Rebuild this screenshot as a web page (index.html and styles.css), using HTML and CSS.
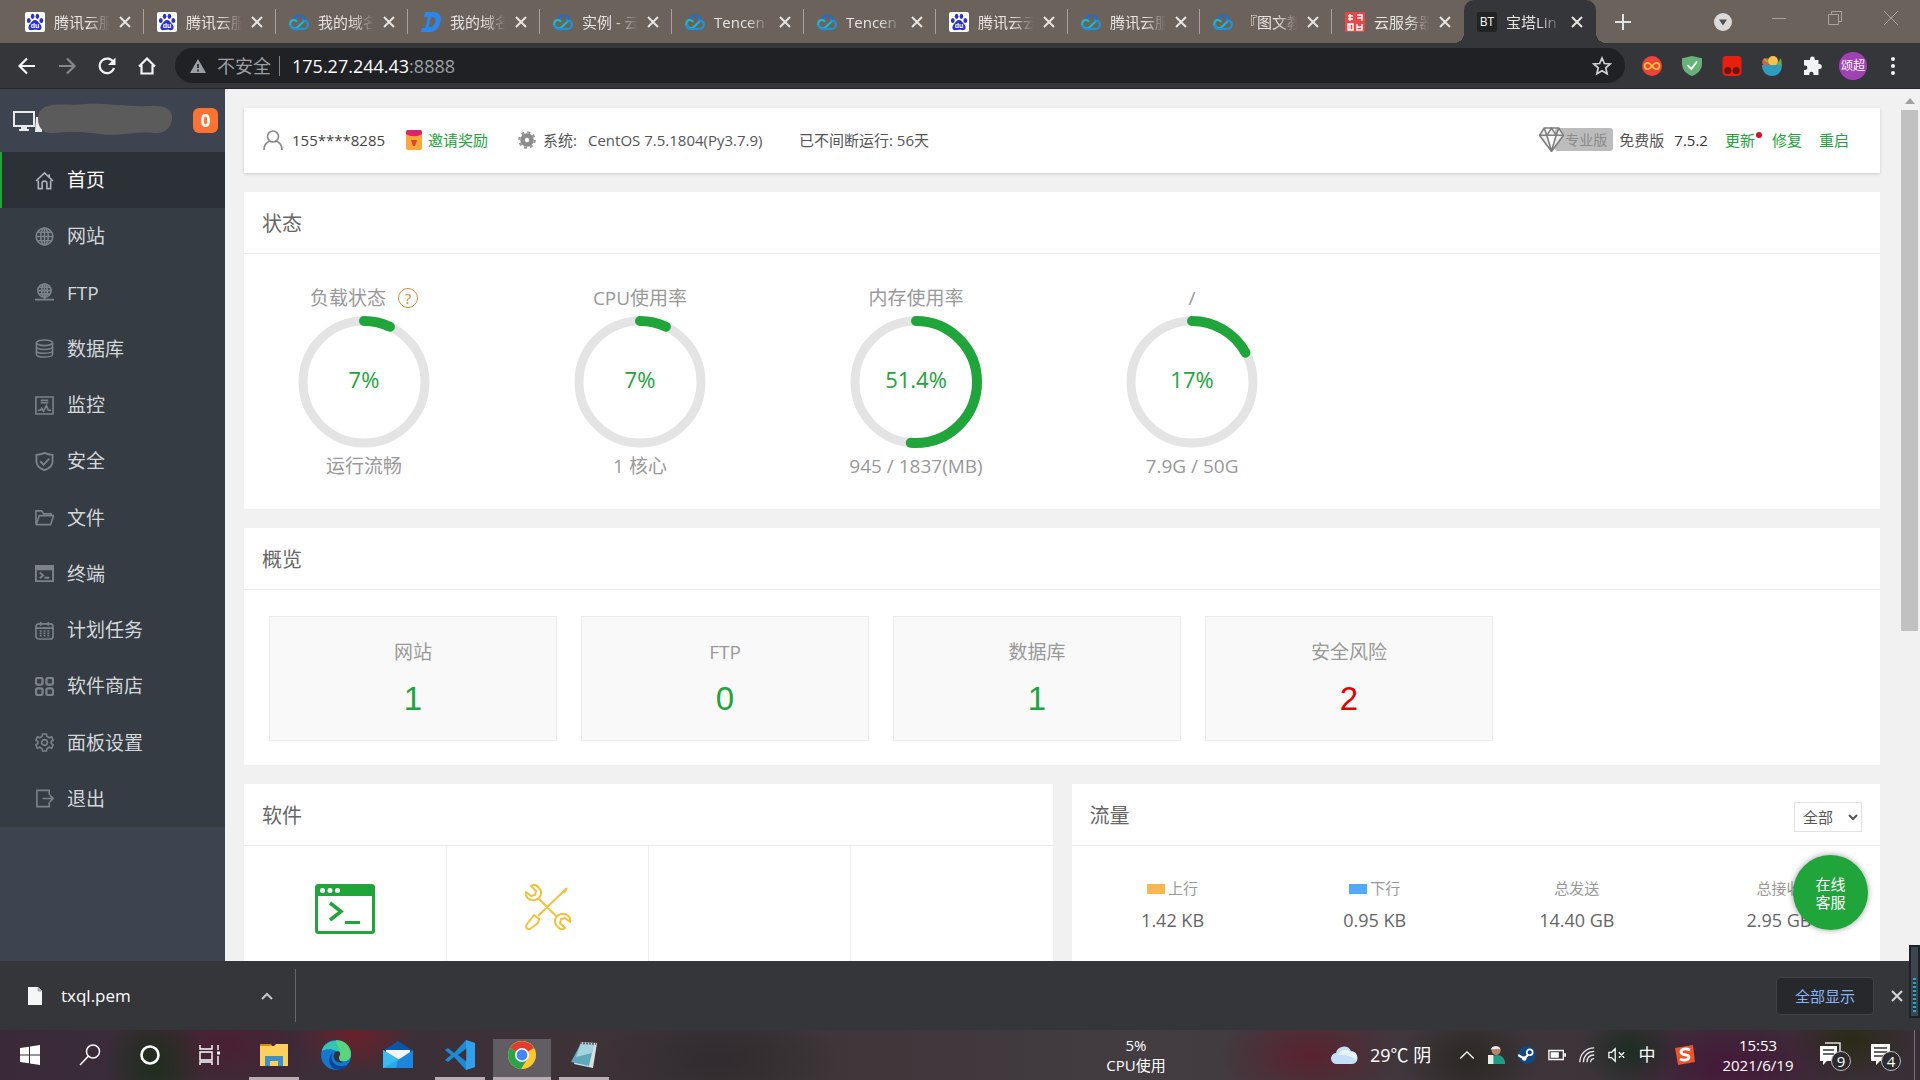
FILE: index.html
```html
<!DOCTYPE html>
<html lang="zh-CN">
<head>
<meta charset="utf-8">
<meta name="viewport" content="width=device-width, initial-scale=1">
<title>宝塔Linux面板</title>
<link rel="stylesheet" href="styles.css">
</head>
<body>
<svg class="sprite" aria-hidden="true">
  <symbol id="baidu" viewBox="0 0 20 20"><rect width="20" height="20" rx="2" fill="#fff"/><g fill="#2a2fd0"><ellipse cx="3.8" cy="8.6" rx="1.9" ry="2.5"/><ellipse cx="7.6" cy="4.3" rx="1.8" ry="2.6"/><ellipse cx="12.4" cy="4.3" rx="1.8" ry="2.6"/><ellipse cx="16.3" cy="8.6" rx="1.9" ry="2.5"/><path d="M10 8c2.300 0 3 2.200 5 4 2 1.700 2.500 6.200-1.200 6.200-1.500 0-2.400-.4-3.800-.4s-2.300.4-3.800.4C2.500 18.200 3 13.700 5 12c2-1.800 2.700-4 5-4z"/></g><text x="10" y="16" font-family="Liberation Sans" font-size="7" font-weight="bold" fill="#fff" text-anchor="middle">du</text></symbol>
  <symbol id="tcloud" viewBox="0 0 20 20"><g fill="none" stroke-width="2.200" stroke-linecap="round"><path d="M5 7.500C6 2.500 14 2 15.500 7.800" stroke="#1f6fd0"/><path d="M7.500 9.200C3.500 6 .8 10 1.300 12.500c.8 4 5.500 4.600 8 2l5-4.800" stroke="#22b8c8"/><path d="M14 8.300c6.500.2 6.200 8.500.3 8.500H5.500c-2.500 0-3.500-1.300-3.900-3" stroke="#2092d8"/></g></symbol>
  <symbol id="dns" viewBox="0 0 20 20"><path fill-rule="evenodd" d="M4 0h9c5 0 8 4 6.500 10C18 16.500 14 20 9 20H0l1-4h3L7 5H3zM10 5L7.500 15H9c3 0 4.500-2.500 5.200-5 .8-3-.2-5-2.700-5z" fill="#2b86ee"/></symbol>
  <symbol id="seal" viewBox="0 0 20 20"><rect width="20" height="20" rx="1" fill="#e8474a"/><path d="M3 4h5M5 2v7M3 7h5M12 3h5v6M12 6h5M3 12h5v6H3zM5 12v6M12 12v6h5v-6M12 15h5" stroke="#fff" stroke-width="1.400" fill="none"/></symbol>
  <symbol id="x" viewBox="0 0 12 12"><path d="M1 1l10 10M11 1L1 11" stroke="currentColor" stroke-width="2"/></symbol>
</svg>

<header class="tabs">
  <div class="tab"><svg class="fav"><use href="#baidu"/></svg><span class="tab-title">腾讯云服</span><button class="tab-x" aria-label="关闭"><svg><use href="#x"/></svg></button></div>
  <div class="tab"><svg class="fav"><use href="#baidu"/></svg><span class="tab-title">腾讯云服</span><button class="tab-x" aria-label="关闭"><svg><use href="#x"/></svg></button></div>
  <div class="tab"><svg class="fav"><use href="#tcloud"/></svg><span class="tab-title">我的域名</span><button class="tab-x" aria-label="关闭"><svg><use href="#x"/></svg></button></div>
  <div class="tab"><svg class="fav"><use href="#dns"/></svg><span class="tab-title">我的域名</span><button class="tab-x" aria-label="关闭"><svg><use href="#x"/></svg></button></div>
  <div class="tab"><svg class="fav"><use href="#tcloud"/></svg><span class="tab-title">实例 - 云</span><button class="tab-x" aria-label="关闭"><svg><use href="#x"/></svg></button></div>
  <div class="tab"><svg class="fav"><use href="#tcloud"/></svg><span class="tab-title">Tencen</span><button class="tab-x" aria-label="关闭"><svg><use href="#x"/></svg></button></div>
  <div class="tab"><svg class="fav"><use href="#tcloud"/></svg><span class="tab-title">Tencen</span><button class="tab-x" aria-label="关闭"><svg><use href="#x"/></svg></button></div>
  <div class="tab"><svg class="fav"><use href="#baidu"/></svg><span class="tab-title">腾讯云云</span><button class="tab-x" aria-label="关闭"><svg><use href="#x"/></svg></button></div>
  <div class="tab"><svg class="fav"><use href="#tcloud"/></svg><span class="tab-title">腾讯云服</span><button class="tab-x" aria-label="关闭"><svg><use href="#x"/></svg></button></div>
  <div class="tab"><svg class="fav"><use href="#tcloud"/></svg><span class="tab-title">『图文教</span><button class="tab-x" aria-label="关闭"><svg><use href="#x"/></svg></button></div>
  <div class="tab no-line"><svg class="fav"><use href="#seal"/></svg><span class="tab-title">云服务器</span><button class="tab-x" aria-label="关闭"><svg><use href="#x"/></svg></button></div>
  <div class="tab active"><span class="fav bt">BT</span><span class="tab-title">宝塔Lin</span><button class="tab-x" aria-label="关闭"><svg><use href="#x"/></svg></button></div>
  <button class="new-tab" aria-label="新标签页"><svg width="16" height="16" viewBox="0 0 16 16"><path d="M8 0v16M0 8h16" stroke="#e4e2e0" stroke-width="2"/></svg></button>
  <div class="win-btns">
    <button aria-label="标签搜索"><svg width="18" height="18" viewBox="0 0 18 18"><circle cx="9" cy="9" r="9" fill="#dddbda"/><path d="M5 6.500h8l-4 6z" fill="#55504c"/></svg></button>
    <button aria-label="最小化"><svg width="14" height="14" viewBox="0 0 14 14"><path d="M0 7.500h14" stroke="#a8a39e"/></svg></button>
    <button aria-label="还原"><svg width="14" height="14" viewBox="0 0 14 14"><path d="M.5 3.500h10v10H.5zM3.500 3.500v-3h10v10h-3" fill="none" stroke="#a8a39e"/></svg></button>
    <button aria-label="关闭窗口"><svg width="14" height="14" viewBox="0 0 14 14"><path d="M0 0l14 14M14 0L0 14" stroke="#a8a39e"/></svg></button>
  </div>
</header>

<nav class="toolbar">
  <button aria-label="后退"><svg viewBox="0 0 20 20"><path d="M18 10H3M10 2.500L2.500 10l7.500 7.500" fill="none" stroke="#f1f3f4" stroke-width="2.200"/></svg></button>
  <button aria-label="前进"><svg viewBox="0 0 20 20"><path d="M2 10h15M10 2.500l7.500 7.500-7.500 7.500" fill="none" stroke="#84878b" stroke-width="2.200"/></svg></button>
  <button aria-label="刷新"><svg viewBox="0 0 20 20"><path d="M16.500 6.500A7.300 7.300 0 1 0 17 12" fill="none" stroke="#f1f3f4" stroke-width="2.200"/><path d="M18.500 1.500v7.500H11z" fill="#f1f3f4"/></svg></button>
  <button aria-label="主页"><svg viewBox="0 0 20 20"><path d="M2 10.500L10 2.500l8 8M4.500 9v8.500h11V9" fill="none" stroke="#f1f3f4" stroke-width="2.200"/></svg></button>
  <div class="omni">
    <svg class="warn" viewBox="0 0 16 14"><path d="M8 0l8 14H0z" fill="#9aa0a6"/><path d="M8 5v4M8 10.500v2" stroke="#202124" stroke-width="1.600"/></svg>
    <span class="unsafe">不安全</span><span class="omni-sep"></span>
    <span class="url">175.27.244.43<span>:8888</span></span>
    <svg class="star" viewBox="0 0 20 20"><path d="M10 2l2.400 5.500 5.800.5-4.400 3.900 1.300 5.800-5.100-3-5.100 3 1.300-5.800L1.800 8l5.800-.5z" fill="none" stroke="#d0d2d5" stroke-width="1.700"/></svg>
  </div>
  <div class="exts">
    <button aria-label="扩展 1"><svg viewBox="0 0 20 20"><circle cx="10" cy="10" r="10" fill="#ef4238"/><path d="M10 10C8 7 7 6.800 5.800 6.800a3.200 3.200 0 0 0 0 6.400C7 13.200 8 13 10 10s3-3.200 4.200-3.200a3.200 3.200 0 0 1 0 6.400C13 13.200 12 13 10 10z" fill="none" stroke="#ffc43a" stroke-width="1.800"/></svg></button>
    <button aria-label="扩展 2"><svg viewBox="0 0 20 20"><path d="M10 0l10 2.200v5.300C20 14 15 18.500 10 20 5 18.500 0 14 0 7.500V2.200z" fill="#67b279"/><path d="M5.500 9l3.800 4L15 5.500" fill="none" stroke="#fff" stroke-width="1.800"/></svg></button>
    <button aria-label="扩展 3"><svg viewBox="0 0 20 20"><rect y="0" x=".5" width="19" height="20" rx="4" fill="#e81f0c"/><circle cx="5.800" cy="14.500" r="3.500" fill="#6b1510"/><circle cx="14.200" cy="14.500" r="3.500" fill="#6b1510"/></svg></button>
    <button aria-label="扩展 4"><svg viewBox="0 0 20 20"><circle cx="4" cy="6" r="3.800" fill="#e45b3c"/><path d="M14 9l5-7 1 8z" fill="#6fae3d"/><circle cx="11" cy="5" r="5" fill="#f7c24a"/><path d="M2 3l4 3" stroke="#7cbf3a" stroke-width="2"/><path d="M0 9h20c0 7-4.500 11-10 11S0 16 0 9z" fill="#2f9cc0"/></svg></button>
    <button aria-label="扩展程序"><svg viewBox="0 0 20 20"><path d="M8 4V3a2.400 2.400 0 0 1 4.800 0v1H16.500v4h.8a2.400 2.400 0 0 1 0 5h-.8v6h-5v-1.200a2.100 2.100 0 0 0-4.200 0V19H2v-5h1.200a2.200 2.200 0 0 0 0-4.400H2V4z" fill="#f1f3f4"/></svg></button>
    <button class="avatar" aria-label="用户">颂超</button>
    <button aria-label="菜单"><svg viewBox="0 0 20 20" fill="#f1f3f4"><circle cx="10" cy="3" r="2"/><circle cx="10" cy="10" r="2"/><circle cx="10" cy="17" r="2"/></svg></button>
  </div>
</nav>

<div class="page">
  <aside class="side">
    <div class="side-head">
      <svg width="22" height="20" viewBox="0 0 22 20"><rect x="1" y="1" width="20" height="14" fill="none" stroke="#e8eaec" stroke-width="2"/><path d="M8 15h6v3h2v2H6v-2h2z" fill="#e8eaec"/></svg>
      <svg class="blob" viewBox="0 0 137 32"><path d="M1 14h6v15H0z" fill="#e8eaec"/><path d="M13 3C22 0 38 3 50 1c18-1 42 3 66 2 14-1 22 4 21 12 0 9-7 16-18 15-20-2-35 4-54 1-22-3-32-2-48-1C8 31 3 24 3 16 3 9 6 5 13 3z" fill="#5b5b5b"/></svg>
      <span class="count">0</span>
    </div>
    <nav class="menu">
      <a class="on" href="#"><svg viewBox="0 0 20 20"><path d="M1 10.500L10 2l9 8.500M15 3.500v3M3.500 10v8.500h4V13a2.500 2.500 0 0 1 5 0v5.500h4V10"/></svg>首页</a>
      <a href="#"><svg viewBox="0 0 20 20"><circle cx="10" cy="10" r="8.800"/><ellipse cx="10" cy="10" rx="4" ry="8.800"/><path d="M1.500 10h17M3 5.500h14M3 14.500h14M10 1v18"/></svg>网站</a>
      <a href="#"><svg viewBox="0 0 20 20"><circle cx="10" cy="8" r="7"/><ellipse cx="10" cy="8" rx="3" ry="7"/><path d="M3 8h14M4 4.500h12M4 11.500h12M10 1v17M0 17.500h20" /></svg>FTP</a>
      <a href="#"><svg viewBox="0 0 20 20"><ellipse cx="10" cy="4" rx="8.500" ry="3"/><path d="M1.500 4v12c0 4 17 4 17 0V4M1.500 8c0 4 17 4 17 0M1.500 12c0 4 17 4 17 0"/></svg>数据库</a>
      <a href="#"><svg viewBox="0 0 20 20"><path d="M1 1h18v18H1zM3 15h3l1-2 2 3 3-6 2 5h3M6 4.500h8M6 7h8"/></svg>监控</a>
      <a href="#"><svg viewBox="0 0 20 20"><path d="M10 1c3 1.500 6 2 8.500 2v7c0 4.500-4 7.500-8.500 9.200C5.500 17.500 1.500 14.500 1.500 10V3C4 3 7 2.500 10 1zM5.500 9.500l3.500 4 6-6.500" stroke-width="2"/></svg>安全</a>
      <a href="#"><svg viewBox="0 0 20 20"><path d="M1 17V3h6l2 3h8v2M1.500 17L4.500 8H19.500l-3 9.500h-15z"/></svg>文件</a>
      <a href="#"><svg viewBox="0 0 20 20"><path d="M1 2h18v16H1zM1 4h18M1 5.500h18M5 9l3.500 3L5 15M10 14.500h5" stroke-width="2"/></svg>终端</a>
      <a href="#"><svg viewBox="0 0 20 20"><rect x="1" y="3" width="18" height="16" rx="3"/><path d="M1 7.500h18M6 1v4M14 1v4"/><path d="M5 10.500h10M5 13h10M5 15.500h10" stroke-dasharray="2 2"/></svg>计划任务</a>
      <a href="#"><svg viewBox="0 0 20 20"><g stroke-width="2.400"><rect x="1" y="1" width="7" height="7" rx="2"/><rect x="12" y="1" width="7" height="7" rx="2"/><rect x="1" y="12" width="7" height="7" rx="2"/><rect x="12" y="12" width="7" height="7" rx="2"/></g></svg>软件商店</a>
      <a href="#"><svg viewBox="0 0 20 20"><path d="M8 1h4l.6 2.500L15 5l2.500-1L19 7.500 17 9v2l2 1.500-1.500 3.500-2.500-1-2.400 1.500L12 19H8l-.6-2.500L5 15l-2.500 1L1 12.500 3 11V9L1 7.500 2.500 4 5 5l2.400-1.500z"/><circle cx="10" cy="10" r="3"/></svg>面板设置</a>
      <a href="#"><svg viewBox="0 0 20 20"><path d="M15 6V1.500H2v17h13V14M8 10h11M15.500 6.500L19 10l-3.500 3.500"/></svg>退出</a>
    </nav>
  </aside>

  <main class="main">
    <section class="card info">
      <svg class="i-user" viewBox="0 0 20 20"><circle cx="10" cy="6.500" r="5.500" fill="none" stroke="#888" stroke-width="1.600"/><path d="M1 20c0-5 3-8 6-9M19 20c0-5-3-8-6-9" fill="none" stroke="#888" stroke-width="1.600"/></svg>
      <span class="phone">155****8285</span>
      <svg class="i-gift" viewBox="0 0 16 20"><rect width="16" height="20" rx="2" fill="#f9a83c"/><path d="M0 2a2 2 0 0 1 2-2h12a2 2 0 0 1 2 2v2c-4 3-12 3-16 0z" fill="#dc2468"/><path d="M5 10h6l-2 6H7z" fill="#e2432f"/></svg>
      <a class="invite" href="#">邀请奖励</a>
      <svg class="i-gear" viewBox="0 0 20 20"><circle cx="10" cy="10" r="5" fill="none" stroke="#8c8c8c" stroke-width="5"/><circle cx="10" cy="10" r="8.500" fill="none" stroke="#999" stroke-width="2.600" stroke-dasharray="3.300 3.370"/></svg>
      <span class="sys">系统:</span><span class="os">CentOS 7.5.1804(Py3.7.9)</span><span>已不间断运行: 56天</span>
      <div class="version">
        <span class="pro"><svg viewBox="0 0 24 24"><path d="M5 1h14l4.500 7L12 23.500.5 8zM.5 8h23M5 1l2.500 7L12 1l4.500 7L19 1M7.500 8L12 23l4.500-15" fill="#eee" stroke="#7d7d7d" stroke-width="1.500"/></svg><span class="pro-tag">专业版</span></span>
        <span class="free">免费版</span><span class="num">7.5.2</span>
        <a class="update" href="#">更新</a><a href="#">修复</a><a href="#">重启</a>
      </div>
    </section>

    <section class="card">
      <h2>状态</h2>
      <div class="gauges">
        <div class="gauge"><span class="name">负载状态<button class="help" aria-label="帮助">?</button></span><div class="ring"><svg viewBox="0 0 132 132"><circle cx="66" cy="66" r="61"/><circle class="val" cx="66" cy="66" r="61" pathLength="100" stroke-dasharray="7 100"/></svg><b>7%</b></div><span>运行流畅</span></div>
        <div class="gauge"><span class="name">CPU使用率</span><div class="ring"><svg viewBox="0 0 132 132"><circle cx="66" cy="66" r="61"/><circle class="val" cx="66" cy="66" r="61" pathLength="100" stroke-dasharray="7 100"/></svg><b>7%</b></div><span>1 核心</span></div>
        <div class="gauge"><span class="name">内存使用率</span><div class="ring"><svg viewBox="0 0 132 132"><circle cx="66" cy="66" r="61"/><circle class="val" cx="66" cy="66" r="61" pathLength="100" stroke-dasharray="51.4 100"/></svg><b>51.4%</b></div><span>945 / 1837(MB)</span></div>
        <div class="gauge"><span class="name">/</span><div class="ring"><svg viewBox="0 0 132 132"><circle cx="66" cy="66" r="61"/><circle class="val" cx="66" cy="66" r="61" pathLength="100" stroke-dasharray="17 100"/></svg><b>17%</b></div><span>7.9G / 50G</span></div>
      </div>
    </section>

    <section class="card">
      <h2>概览</h2>
      <div class="stats">
        <div class="stat"><span>网站</span><a href="#">1</a></div>
        <div class="stat"><span>FTP</span><a href="#">0</a></div>
        <div class="stat"><span>数据库</span><a href="#">1</a></div>
        <div class="stat"><span>安全风险</span><a class="risk" href="#">2</a></div>
      </div>
    </section>

    <div class="pair">
      <section class="card">
        <h2>软件</h2>
        <div class="apps">
          <div><svg width="60" height="50" viewBox="0 0 60 50"><rect x="1.500" y="1.500" width="57" height="47" rx="2" fill="none" stroke="#20a53a" stroke-width="3"/><path d="M1 1h58v11H1z" fill="#20a53a"/><g fill="#fff"><circle cx="7.500" cy="6.500" r="2.500"/><circle cx="15" cy="6.500" r="2.500"/><circle cx="22.500" cy="6.500" r="2.500"/></g><path d="M15 19l11 8.500L15 36" fill="none" stroke="#20a53a" stroke-width="3.500"/><path d="M30 38.500h15" stroke="#20a53a" stroke-width="3"/></svg></div>
          <div><svg width="46" height="46" viewBox="0 0 46 46" fill="none" stroke="#f4c13d" stroke-width="2" stroke-linejoin="round"><path d="M6 2l5 5-1 4-4 1-5-4c-1 5 3 9 9 8 6-2 8-8 4-12-2-3-5-4-8-2zM13 14l18 18M40 44l-5-5 1-4 4-1 5 4c1-5-3-9-9-8-6 2-8 8-4 12 2 3 5 4 8 2zM42 4L13 32M42 4l-3 5M9 31l5 4-1 4-8 6c-3 1-5-2-3-5z"/></svg></div>
          <div></div><div></div>
        </div>
      </section>
      <section class="card">
        <div class="card-head"><h2>流量</h2><select aria-label="网卡"><option>全部</option></select></div>
        <div class="flow">
          <div><span><i class="up"></i>上行</span><strong>1.42 KB</strong></div>
          <div><span><i class="down"></i>下行</span><strong>0.95 KB</strong></div>
          <div><span>总发送</span><strong>14.40 GB</strong></div>
          <div><span>总接收</span><strong>2.95 GB</strong></div>
        </div>
      </section>
    </div>
  </main>
  <div class="scroll"><svg width="10" height="6" viewBox="0 0 10 6"><path d="M5 0l5 6H0z" fill="#a0a0a0"/></svg><div class="thumb"></div></div>
  <button class="service">在线<br>客服</button>
</div>

<footer class="downloads">
  <div class="file"><svg width="14" height="18" viewBox="0 0 14 18"><path d="M0 0h10l4 4v14H0z" fill="#f5f6f7"/><path d="M10 0v4h4" fill="#bbb" stroke="#888" stroke-width=".6"/></svg><span>txql.pem</span><button aria-label="更多"><svg width="12" height="8" viewBox="0 0 12 8"><path d="M1 7l5-5 5 5" fill="none" stroke="#c6c8ca" stroke-width="2"/></svg></button></div>
  <button class="show-all">全部显示</button>
  <button class="dl-x" aria-label="关闭下载栏"><svg><use href="#x"/></svg></button>
  <div class="meter"><i></i></div>
</footer>

<div class="taskbar">
  <div class="sys-btns">
    <button aria-label="开始"><svg width="20" height="20" viewBox="0 0 20 20" fill="#fff"><path d="M0 3l9-1.300v7.800H0zM10 1.500L20 0v9.500H10zM0 10.500h9v7.800L0 17zM10 10.500h10V20l-10-1.500z"/></svg></button>
    <button aria-label="搜索"><svg width="22" height="22" viewBox="0 0 22 22"><circle cx="14" cy="7.500" r="6.500" fill="none" stroke="#fff" stroke-width="1.500"/><path d="M9.500 12L1 21" stroke="#fff" stroke-width="1.500"/></svg></button>
    <button aria-label="Cortana"><svg width="20" height="20" viewBox="0 0 20 20"><circle cx="10" cy="10" r="8.500" fill="none" stroke="#fff" stroke-width="2.600"/></svg></button>
    <button aria-label="任务视图"><svg width="22" height="20" viewBox="0 0 22 20" fill="none" stroke="#fff" stroke-width="1.400"><path d="M1 0v4h12V0M1 7h12v8H1zM1 20v-3h12v3M19 0v5M19 11v9"/><path d="M18 6.500h3v3h-3z" fill="#fff" stroke="none"/></svg></button>
  </div>
  <div class="task-apps">
    <button class="run" aria-label="文件资源管理器"><svg viewBox="0 0 30 30"><path d="M1 4h11l2 3H1z" fill="#d88c10"/><path d="M1 6h14l2-2h12v22H1z" fill="#fbd05c"/><path d="M6 26V16h18v10h-5v-5h-8v5z" fill="#3f8fcb"/></svg></button>
    <button aria-label="Edge"><svg viewBox="0 0 30 30"><circle cx="15" cy="15" r="15" fill="#1478cf"/><path d="M1 11C3-2 28-4 30 14c0 5-4 8-9 7-4 0-4-3-3-5 1-5-9-9-17-5z" fill="#36c5b0"/><path d="M15 0c9 0 15 6 15 14 0 5-4 8-9 7-4 0-4-3-3-5 4-7-4-12-3-16z" fill="#68dc6c" opacity=".7"/><path d="M12 12c-4 6 0 15 9 14 3 0 5-1 7-2-4 7-18 9-20-3 0-4 2-7 4-9z" fill="#0b4596"/><path d="M14 12c4-2 7 1 4 5 0 3 1 5 5 5-8 3-13-5-9-10z" fill="#322f42"/></svg></button>
    <button aria-label="邮件"><svg viewBox="0 0 30 30"><path d="M0 11L15 1l15 10z" fill="#0a56a8"/><path d="M3 10h24v10H3z" fill="#f5f5f7"/><path d="M0 10l30 18H0z" fill="#28a8ea"/><path d="M30 10v18H13L15 20z" fill="#1b86db"/><path d="M0 10l15 10L0 28z" fill="#3bbcf0"/></svg></button>
    <button class="run" aria-label="VS Code"><svg viewBox="0 0 30 30"><path d="M21 0l9 3v24l-9 3L9 17l-6 5-3-2 6-5-6-5 3-2 6 5zM22 8l-9 7 9 7z" fill="#1d8ad6" fill-rule="evenodd"/><path d="M21 0l9 3v24l-9 3z" fill="#3aa8f2" opacity=".7"/></svg></button>
    <button class="run current" aria-label="Chrome"><svg viewBox="0 0 30 30"><circle cx="15" cy="15" r="14" fill="#fbc92f"/><path d="M15 15L2.900 8A14 14 0 0 1 27 8z" fill="#e33b2e"/><path d="M3 8a14 14 0 0 0 11 21l7-11-6-3z" fill="#2ba24c"/><circle cx="15" cy="15" r="7" fill="#fff"/><circle cx="15" cy="15" r="5.400" fill="#4285f4"/></svg></button>
    <button class="run" aria-label="记事本"><svg viewBox="0 0 30 30"><path d="M12 2l16 1-4 25-19-4z" fill="#d9dfe0"/><path d="M12 3l13 1-5 22-18-4z" fill="#5fa9ba"/><path d="M12 3l13 1-2 9-16 4z" fill="#a4d4dc"/><path d="M11 3l16 1" stroke="#666" stroke-width="2" stroke-dasharray="2 1"/></svg></button>
  </div>
  <div class="tray">
    <div class="cpu">5%<br>CPU使用</div>
    <div class="weather"><svg width="27" height="20" viewBox="0 0 27 20"><path d="M6 19a5.500 5.500 0 0 1-1-11 8 8 0 0 1 15-2c8 0 9 13 1 13z" fill="#c3e0f7"/><path d="M7 10c2-5 9-7 13-3 5 0 7 5 5 8-6-5-11-5-18-5z" fill="#e9f4fd"/></svg><span>29℃ 阴</span></div>
    <button aria-label="显示隐藏图标"><svg viewBox="0 0 20 20"><path d="M2.500 14L10 6.500l7.500 7.500" fill="none" stroke="#fff" stroke-width="1.500"/></svg></button>
    <button aria-label="助手"><svg viewBox="0 0 20 20"><circle cx="9" cy="5" r="5" fill="#b7846b"/><path d="M3 4c1-5 10-5 11 0l-3-1z" fill="#eee"/><path d="M2 20c0-8 4-10 8-10 5 0 9 3 9 10z" fill="#219a86"/><path d="M0 20V10h6v10z" fill="#e5eeea"/></svg></button>
    <button aria-label="Steam"><svg viewBox="0 0 20 20"><circle cx="10" cy="10" r="10" fill="#14477f"/><circle cx="13" cy="7" r="3.300" fill="none" stroke="#fff" stroke-width="1.800"/><path d="M11 10l-4 4L0 10" stroke="#fff" stroke-width="2.400" fill="none"/><circle cx="7" cy="14" r="2.500" fill="#fff"/></svg></button>
    <button aria-label="电池"><svg viewBox="0 0 20 20"><path d="M1 5h16v10H1z" fill="none" stroke="#fff" stroke-width="1.500"/><path d="M3 7h9v6H3zM18 8h2v4h-2z" fill="#fff"/></svg></button>
    <button aria-label="网络"><svg viewBox="0 0 20 20" fill="none" stroke="#e8e8e8" stroke-width="1.400"><path d="M2 18C2 9 9 2 18 2M6 18c0-7 5-12 12-12M10 18c0-5 3-8 8-8M14 18c0-3 1.500-4 4-4"/></svg></button>
    <button aria-label="静音"><svg viewBox="0 0 20 20" fill="none" stroke="#fff" stroke-width="1.400"><path d="M1 7h3l4-4v14l-4-4H1zM12 7l6 6M18 7l-6 6"/></svg></button>
    <button class="ime" aria-label="输入法">中</button>
    <button class="sogou" aria-label="搜狗"><svg viewBox="0 0 20 20"><path d="M0 3l18-3 2 17-17 3z" fill="#ec5527"/><path d="M15 5c-4-2-9-1-9 2 0 4 8 2 8 5 0 3-5 4-9 2" fill="none" stroke="#fff" stroke-width="2.800"/></svg></button>
    <div class="clock">15:53<br>2021/6/19</div>
    <button class="note" aria-label="消息"><svg viewBox="0 0 30 30"><path d="M6 3h15v13" fill="none" stroke="#ddd" stroke-width="1.500"/><path d="M1 6h17v15H8l-4 4v-4H1z" fill="#fff"/><path d="M4 10h11M4 14h11" stroke="#333" stroke-width="1.500"/></svg><i>9</i></button>
    <button class="note" aria-label="操作中心"><svg viewBox="0 0 30 30"><path d="M2 4h19v17H11l-4 4v-4H2z" fill="#fff"/><path d="M5 8h13M5 12h13M5 16h9" stroke="#333" stroke-width="1.500"/></svg><i>4</i></button>
  </div>
</div>
</body>
</html>
```
FILE: styles.css
```css
* { box-sizing: border-box; }
body {
  margin: 0;
  height: 100vh;
  display: flex;
  flex-direction: column;
  overflow: hidden;
  font-family: "Open Sans", "Noto Sans CJK SC", sans-serif;
  font-size: 15px;
  line-height: 20px;
  color: #555;
  background: #f1f1f1;
}
button { padding: 0; border: 0; background: none; font: inherit; color: inherit; display: flex; align-items: center; justify-content: center; }
a { color: #20a53a; text-decoration: none; }
.sprite { position: absolute; width: 0; height: 0; }

/* Tab strip */
.tabs { flex: none; height: 43px; padding-left: 12px; display: flex; background: #6b625b; color: #e6e3e0; }
.tab { position: relative; flex: 0 1 132px; min-width: 0; display: flex; align-items: center; padding: 0 13px; gap: 9px; }
.tab::after { content: ""; position: absolute; right: 0; top: 9px; width: 1px; height: 25px; background: #a8a29c; }
.fav { flex: none; width: 20px; height: 20px; }
.bt { background: #222; color: #fff; font-size: 12px; text-align: center; border-radius: 2px; }
.tab-title { flex: 1; overflow: hidden; white-space: nowrap; -webkit-mask-image: linear-gradient(90deg, #000 60%, transparent); mask-image: linear-gradient(90deg, #000 60%, transparent); }
.tab-x svg { width: 12px; height: 12px; }
.no-line::after { display: none; }
.tab.active { background: #35363a; border-radius: 10px 10px 0 0; }
.tab.active::before, .tab.active::after { content: ""; position: absolute; top: auto; bottom: 0; width: 10px; height: 10px; }
.tab.active::before { left: -10px; background: radial-gradient(circle at 0 0, #6b625b 10px, #35363a 10px); }
.tab.active::after { right: -10px; background: radial-gradient(circle at 100% 0, #6b625b 10px, #35363a 10px); }
.new-tab { width: 54px; height: 43px; }
.win-btns { margin-left: auto; display: flex; }
.win-btns button { width: 56px; height: 36px; }
.win-btns button:first-child { height: 43px; }
.win-btns button:last-child { margin-right: 1px; }

/* Address bar */
.toolbar { flex: none; height: 46px; padding-left: 7px; display: flex; align-items: center; background: #35363a; border-bottom: 1px solid #26272a; }
.toolbar > button { width: 40px; height: 40px; }
.toolbar button svg { width: 20px; height: 20px; }
.omni { flex: 1; height: 35px; margin-left: 8px; padding: 0 13px 0 15px; display: flex; align-items: center; border-radius: 18px; background: #202124; font-size: 18px; }
.warn { width: 16px; height: 14px; margin-right: 11px; }
.unsafe { color: #9aa0a6; }
.omni-sep { width: 1px; height: 20px; margin: 0 12px 0 8px; background: #808388; }
.url { color: #fff; }
.url span { color: #9aa0a6; }
.star { width: 20px; height: 20px; margin-left: auto; }
.exts { display: flex; align-items: center; padding: 0 7px; }
.exts button { width: 40px; height: 40px; }
.exts .avatar { width: 28px; height: 28px; margin: 0 6px 0 7px; border-radius: 50%; background: #a142b4; color: #fff; font-size: 12px; }

/* Panel */
.page { flex: 1; min-height: 0; position: relative; display: flex; overflow: hidden; }
.side { flex: none; width: 225px; background: #3d444f; }
.side-head { height: 63px; padding: 0 7px 0 13px; display: flex; align-items: center; }
.blob { width: 137px; height: 32px; margin: -4px 0 0; }
.count { width: 25px; height: 25px; margin-left: auto; border-radius: 6px; background: #fb7232; color: #fff; font-weight: bold; font-size: 17px; line-height: 25px; text-align: center; }
.menu { height: 675px; display: grid; grid-auto-rows: 1fr; background: #353c44; }
.menu a { display: flex; align-items: center; gap: 13px; padding-left: 33px; border-left: 2px solid transparent; color: #d4d7da; font-size: 19px; }
.menu svg { width: 19px; height: 19px; fill: none; stroke: #7c8288; stroke-width: 1.700; }
.menu .on { background: #2c3138; border-color: #20a53a; color: #fff; }
.menu .on svg { stroke: #aeb2b6; }

.main { flex: 1; min-width: 0; padding: 19px 18px 0 19px; display: flex; flex-direction: column; gap: 19px; }
.card { flex: none; background: #fff; }
.info { height: 65px; padding: 0 31px 2px 19px; display: flex; align-items: center; white-space: nowrap; box-shadow: 0 1px 3px rgba(0,0,0,.16); }
.i-user { width: 20px; height: 20px; margin-right: 9px; }
.phone { width: 114px; color: #444; }
.i-gift { width: 16px; height: 20px; margin-right: 6px; }
.invite { width: 90px; }
.i-gear { width: 18px; height: 18px; margin-right: 7px; }
.sys { width: 45px; }
.os { width: 211px; }
.version { margin-left: auto; display: flex; align-items: center; }
.version > a + a { margin-left: 17px; }
.pro { display: flex; align-items: center; margin-right: 6px; }
.pro svg { position: relative; width: 25px; height: 25px; margin-right: -9px; }
.pro-tag { width: 58px; height: 23px; padding-left: 10px; border-radius: 3px; background: #bcbcbc; color: #8b8b8b; font-size: 14px; line-height: 23px; }
.num { margin: 0 17px 0 10px; color: #333; }
.update { position: relative; }
.update::after { content: ""; position: absolute; right: -7px; top: 2px; width: 6px; height: 6px; border-radius: 50%; background: #d5121b; }

h2 { margin: 0; height: 62px; padding: 0 18px; border-bottom: 1px solid #eaeaea; font-size: 20px; font-weight: normal; line-height: 64px; color: #666; }
.gauges { display: flex; gap: 76px; padding: 34px 20px 33px; color: #999; font-size: 19px; line-height: 20px; white-space: nowrap; }
.gauge { width: 200px; display: flex; flex-direction: column; align-items: center; }
.name { display: flex; align-items: center; height: 20px; margin-bottom: 8px; }
.help { width: 20px; height: 20px; margin-left: 12px; border: 1px solid #d08c3c; border-radius: 50%; color: #d08c3c; font-size: 15px; }
.ring { width: 132px; height: 132px; margin-bottom: 8px; display: grid; place-items: center; }
.ring > * { grid-area: 1 / 1; }
.ring svg { width: 132px; height: 132px; fill: none; stroke: #e4e4e4; stroke-width: 9; transform: rotate(-90deg); }
.ring .val { stroke: #20a53a; stroke-width: 10; stroke-linecap: round; }
.ring b { padding-bottom: 6px; font-size: 22px; font-weight: normal; color: #20a53a; }

.stats { display: flex; gap: 24px; padding: 26px 25px 24px; }
.stat { flex: 0 1 288px; height: 125px; padding-top: 21px; border: 1px solid #ececec; background: #f9f9f9; display: flex; flex-direction: column; align-items: center; gap: 15px; color: #999; font-size: 19px; line-height: 28px; }
.stat a { font: 33px/36px "Liberation Sans", sans-serif; }
.stat .risk { color: #e60000; }

.pair { display: grid; grid-template-columns: 1fr 1fr; gap: 19px; }
.apps { display: grid; grid-template-columns: repeat(4, 1fr); height: 180px; }
.apps div { padding-top: 38px; text-align: center; }
.apps div + div { border-left: 1px solid #eee; }
.card-head { display: flex; align-items: center; justify-content: space-between; padding-right: 18px; border-bottom: 1px solid #eaeaea; }
.card-head h2 { border: 0; height: 61px; }
.card-head select { width: 68px; height: 30px; margin-top: 4px; padding: 0 4px; border: 1px solid #e3e3e3; border-radius: 0; background: #fff; color: #555; font: inherit; }
.flow { display: grid; grid-template-columns: repeat(4, 1fr); padding-top: 32px; text-align: center; }
.flow div { display: flex; flex-direction: column; gap: 12px; }
.flow span { color: #999; }
.flow i { display: inline-block; width: 18px; height: 10px; margin-right: 3px; }
.flow .up { background: #f7b851; }
.flow .down { background: #52a9ff; }
.flow strong { font-size: 18px; font-weight: normal; color: #666; }
.scroll { flex: none; width: 22px; padding: 9px 2px 0 3px; display: flex; flex-direction: column; align-items: center; background: #f1f1f1; }
.thumb { width: 17px; height: 521px; margin-top: 6px; background: #c1c1c1; }
.service { position: absolute; right: 52px; bottom: 31px; width: 75px; height: 75px; border-radius: 50%; background: #20a53a; color: #fff; line-height: 18px; box-shadow: 0 0 6px rgba(0,0,0,.4); }

/* Download shelf */
.downloads { flex: none; position: relative; height: 69px; padding-right: 17px; display: flex; align-items: center; background: #35363a; color: #fff; }
.file { width: 296px; height: 53px; padding: 0 22px 0 28px; display: flex; align-items: center; border-right: 1px solid #66686b; font-size: 17px; }
.file span { margin-left: 19px; }
.file button { margin-left: auto; }
.show-all { width: 98px; height: 38px; margin: 0 17px 0 auto; border: 1px solid #414246; border-radius: 4px; background: #27282c; color: #8ab4f8; }
.dl-x { color: #d5d6d8; }
.dl-x svg { width: 12px; height: 12px; }
.meter { position: absolute; right: 0; bottom: 12px; width: 11px; height: 73px; padding: 5px 2px 4px; border: 2px solid #1c2228; background: #3c4650; display: flex; align-items: flex-end; }
.meter i { width: 3px; height: 34px; background: repeating-linear-gradient(#3aa0c8 0 2px, #17384a 2px 4px); }

/* Desktop bar */
.taskbar {
  flex: none; height: 50px; display: flex; color: #fff;
  background:
    radial-gradient(50px 60px at 155px 35px, #1d2e1c, transparent),
    radial-gradient(100px 50px at 225px 15px, #4a1f33, transparent),
    radial-gradient(60px 40px at 355px 5px, #6a202a, transparent),
    radial-gradient(120px 60px at 720px 30px, #302b2e, transparent),
    radial-gradient(90px 50px at 1310px 25px, #5a2230, transparent),
    radial-gradient(70px 50px at 1470px 30px, #2b2824, transparent),
    radial-gradient(50px 40px at 1630px 20px, #1d2c22, transparent),
    radial-gradient(120px 60px at 1730px 35px, #45183a, transparent),
    radial-gradient(60px 40px at 1850px 10px, #2a2a16, transparent),
    linear-gradient(90deg, #3a2a38, #3d3538 40%, #433c40 60%, #382e35);
}
.sys-btns, .task-apps, .tray { display: flex; align-items: center; }
.sys-btns button { width: 60px; height: 50px; }
.task-apps { margin-left: 5px; gap: 4px; }
.task-apps button { position: relative; width: 58px; height: 50px; }
.task-apps svg { width: 30px; height: 30px; }
.task-apps .current { height: 41px; align-self: flex-end; padding-bottom: 9px; background: #625d62; }
.run::after { content: ""; position: absolute; left: 4px; right: 4px; bottom: 0; height: 3px; background: #b9acb3; }
.current::after { left: 0; right: 0; }
.tray { margin-left: auto; padding-right: 5px; margin-right: 5px; border-right: 1px solid #77727a; white-space: nowrap; }
.tray button { width: 30px; height: 50px; }
.tray button svg { width: 18px; height: 18px; }
.cpu { width: 80px; text-align: center; margin-right: 155px; }
.weather { width: 121px; display: flex; align-items: center; gap: 12px; font-size: 18px; }
.tray .ime { font-size: 17px; }
.tray .sogou { width: 45px; }
.tray .sogou svg { width: 20px; height: 20px; }
.clock { width: 102px; text-align: center; }
.tray .note { position: relative; width: 50px; }
.tray .note svg { width: 30px; height: 30px; }
.note i { position: absolute; right: 8px; bottom: 9px; width: 20px; height: 20px; border: 1px solid #bbb; border-radius: 50%; background: #2c2a2d; font-style: normal; font-size: 15px; line-height: 18px; }
```
